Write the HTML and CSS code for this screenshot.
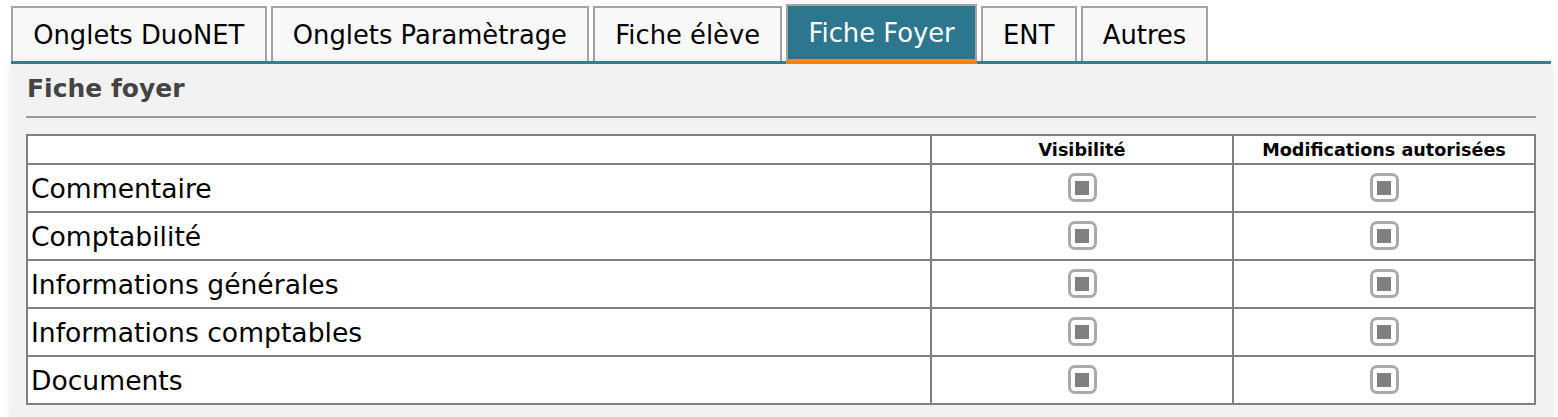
FILE: index.html
```html
<!DOCTYPE html>
<html lang="fr">
<head>
<meta charset="utf-8">
<title>Fiche foyer</title>
<link rel="stylesheet" href="styles.css">
</head>
<body>
<div class="tabs">
  <div class="tab">Onglets DuoNET</div>
  <div class="tab">Onglets Paramètrage</div>
  <div class="tab">Fiche élève</div>
  <div class="tab active">Fiche Foyer</div>
  <div class="tab">ENT</div>
  <div class="tab">Autres</div>
</div>
<div class="panel">
  <h2 class="title">Fiche foyer</h2>
  <div class="rule"></div>
  <table class="grid">
    <thead>
      <tr><th class="c-label"></th><th class="c-vis">Visibilité</th><th class="c-mod">Modifications autorisées</th></tr>
    </thead>
    <tbody>
      <tr><td>Commentaire</td><td class="cb"><span class="check"><span></span></span></td><td class="cb"><span class="check"><span></span></span></td></tr>
      <tr><td>Comptabilité</td><td class="cb"><span class="check"><span></span></span></td><td class="cb"><span class="check"><span></span></span></td></tr>
      <tr><td>Informations générales</td><td class="cb"><span class="check"><span></span></span></td><td class="cb"><span class="check"><span></span></span></td></tr>
      <tr><td>Informations comptables</td><td class="cb"><span class="check"><span></span></span></td><td class="cb"><span class="check"><span></span></span></td></tr>
      <tr><td>Documents</td><td class="cb"><span class="check"><span></span></span></td><td class="cb"><span class="check"><span></span></span></td></tr>
    </tbody>
  </table>
</div>
</body>
</html>
```
FILE: styles.css
```css
html, body {
  margin: 0;
  padding: 0;
  background: #ffffff;
  font-family: "DejaVu Sans", Verdana, sans-serif;
  color: #000;
}

.tabs {
  display: flex;
  align-items: flex-end;
  gap: 4px;
  margin: 4px 0 0 11px;
  width: 1540px;
  height: 57px;
  border-bottom: 3px solid #3d8196;
}

.tab {
  box-sizing: border-box;
  height: 55px;
  padding: 0 20.2px;
  display: flex;
  align-items: center;
  justify-content: center;
  font-size: 25.8px;
  background: #f8f8f8;
  border: 2px solid #a4a4a4;
  border-bottom: none;
}

.tab.active {
  height: 60px;
  margin-bottom: -3px;
  background: #2c768e;
  color: #ffffff;
  border-bottom: 5px solid #ff8c00;
}

.panel {
  margin-left: 11px;
  width: 1540px;
  box-sizing: border-box;
  padding: 10px 15px 20px;
  background: #f2f2f2;
  border-radius: 0 0 12px 12px;
  box-shadow: 0 0 10px rgba(0, 0, 0, 0.12);
  position: relative;
}

.title {
  margin: 0 0 0 1px;
  font-size: 25px;
  font-weight: bold;
  color: #444444;
  line-height: 30px;
}

.rule {
  height: 2px;
  background: #9a9a9a;
  margin: 12px 0 16px;
}

.grid {
  width: 1510px;
  border-collapse: collapse;
  background: #ffffff;
  border: 2px solid #808080;
}

.grid th, .grid td {
  border: 2px solid #808080;
  padding: 0;
}

.grid th {
  height: 27px;
  font-size: 17.6px;
  font-weight: bold;
  text-align: center;
}

.c-label { width: 902px; }
.c-vis { width: 300px; }

.grid td {
  height: 46px;
  font-size: 26.6px;
  padding-left: 3px;
}

.grid td.cb {
  height: 45px;
  padding: 0 0 1px;
}

.check {
  display: flex;
  align-items: center;
  justify-content: center;
  box-sizing: border-box;
  width: 29px;
  height: 29px;
  margin: 0 auto;
  border: 3px solid #aaaaaa;
  border-radius: 7px;
  background: #ffffff;
}

.check span {
  width: 14px;
  height: 14px;
  background: #808080;
}
```
